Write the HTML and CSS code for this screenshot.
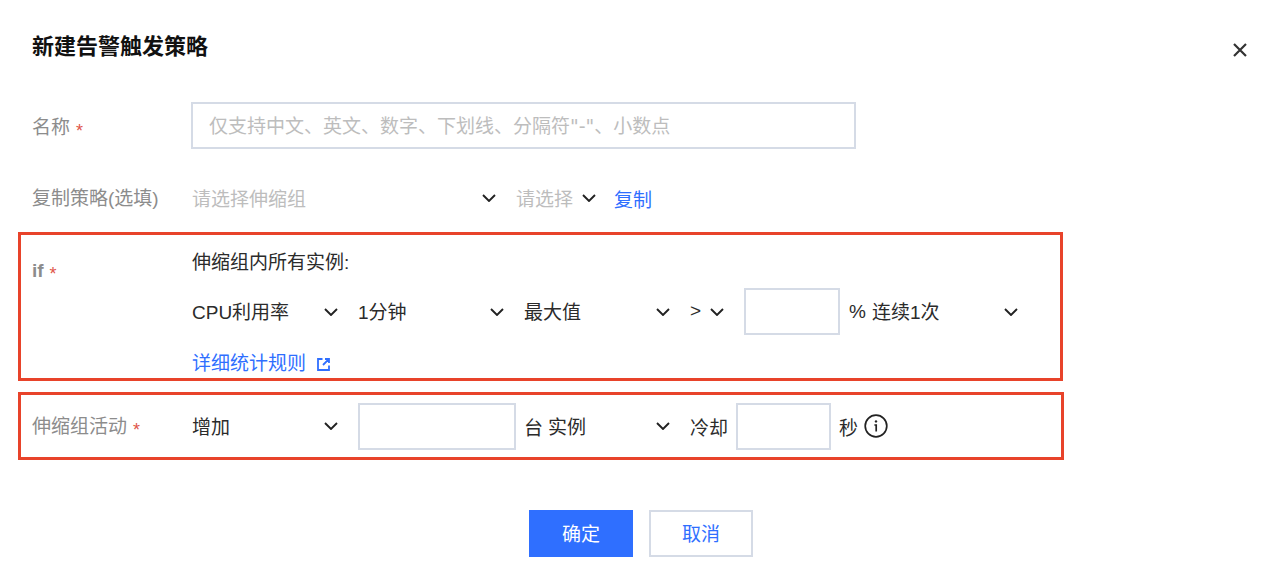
FILE: index.html
```html
<!DOCTYPE html>
<html lang="zh-CN">
<head>
  <meta charset="UTF-8">
  <title>新建告警触发策略</title>
  <link rel="stylesheet" href="styles.css">
</head>
<body>
  <div class="dialog">
    <div class="header">
      <h1 class="title">新建告警触发策略</h1>
      <svg class="close" viewBox="0 0 16 16" width="16" height="16"><path d="M2 2l12 12M14 2L2 14" fill="none" stroke="#333" stroke-width="2.2"/></svg>
    </div>

    <div class="row row-name">
      <div class="label label-name">名称<span class="required">*</span></div>
      <input class="input input-name" type="text" placeholder="仅支持中文、英文、数字、下划线、分隔符&quot;-&quot;、小数点">
    </div>

    <div class="row row-copy">
      <div class="label">复制策略(选填)</div>
      <div class="fields">
        <div class="select select-group placeholder"><span>请选择伸缩组</span><svg class="chevron" viewBox="0 0 14 8" width="14" height="8"><path d="M1 1l6 6 6-6" fill="none" stroke="#222" stroke-width="1.9"/></svg></div>
        <div class="select select-small placeholder"><span>请选择</span><svg class="chevron" viewBox="0 0 14 8" width="14" height="8"><path d="M1 1l6 6 6-6" fill="none" stroke="#222" stroke-width="1.9"/></svg></div>
        <a class="link">复制</a>
      </div>
    </div>

    <div class="box box-if">
      <div class="label label-if"><b>if</b><span class="required">*</span></div>
      <div class="if-body">
        <div class="if-line">伸缩组内所有实例:</div>
        <div class="fields if-fields">
          <div class="select"><span>CPU利用率</span><svg class="chevron" viewBox="0 0 14 8" width="14" height="8"><path d="M1 1l6 6 6-6" fill="none" stroke="#222" stroke-width="1.9"/></svg></div>
          <div class="select"><span>1分钟</span><svg class="chevron" viewBox="0 0 14 8" width="14" height="8"><path d="M1 1l6 6 6-6" fill="none" stroke="#222" stroke-width="1.9"/></svg></div>
          <div class="select"><span>最大值</span><svg class="chevron" viewBox="0 0 14 8" width="14" height="8"><path d="M1 1l6 6 6-6" fill="none" stroke="#222" stroke-width="1.9"/></svg></div>
          <div class="select select-op"><span>&gt;</span><svg class="chevron" viewBox="0 0 14 8" width="14" height="8"><path d="M1 1l6 6 6-6" fill="none" stroke="#222" stroke-width="1.9"/></svg></div>
          <div class="group">
            <input class="input input-num" type="text">
            <span class="unit">%</span>
            <div class="select select-times"><span>连续1次</span><svg class="chevron" viewBox="0 0 14 8" width="14" height="8"><path d="M1 1l6 6 6-6" fill="none" stroke="#222" stroke-width="1.9"/></svg></div>
          </div>
        </div>
        <a class="link rule-link">详细统计规则<svg class="ext" viewBox="0 0 13 13" width="13" height="13"><path d="M5.5 1H1v11h11V7.5M8 1h4v4M11.8 1.2L6 7" fill="none" stroke="#2f6fff" stroke-width="1.8"/></svg></a>
      </div>
    </div>

    <div class="box box-action">
      <div class="label">伸缩组活动<span class="required">*</span></div>
      <div class="fields">
        <div class="select"><span>增加</span><svg class="chevron" viewBox="0 0 14 8" width="14" height="8"><path d="M1 1l6 6 6-6" fill="none" stroke="#222" stroke-width="1.9"/></svg></div>
        <div class="group group-tight">
          <input class="input input-count" type="text">
          <span class="unit">台</span>
          <div class="select select-unit"><span>实例</span><svg class="chevron" viewBox="0 0 14 8" width="14" height="8"><path d="M1 1l6 6 6-6" fill="none" stroke="#222" stroke-width="1.9"/></svg></div>
        </div>
        <div class="group group-tight">
          <span class="unit">冷却</span>
          <input class="input input-cool" type="text">
          <span class="unit">秒</span>
          <svg class="info" viewBox="0 0 24 24" width="24" height="24"><circle cx="12" cy="12" r="10.8" fill="none" stroke="#222" stroke-width="1.7"/><path d="M10.4 11H12.2V17.6" fill="none" stroke="#222" stroke-width="1.7"/><circle cx="12" cy="7.4" r="1.2" fill="#222"/></svg>
        </div>
      </div>
    </div>

    <div class="footer">
      <button class="btn btn-primary">确定</button>
      <button class="btn">取消</button>
    </div>
  </div>
</body>
</html>
```

FILE: styles.css
```css
:root {
  --text-color: #2b2b2b;
  --label-color: #8c8c8c;
  --placeholder-color: #bdbdbd;
  --border-color: #d5dbe6;
  --link-color: #2f6fff;
  --mark-color: #e8432a;
}

body {
  margin: 0;
  background-color: #ffffff;
  color: var(--text-color);
  font-family: "Liberation Sans", "Noto Sans CJK SC", sans-serif;
  font-size: 19px;
}

.dialog {
  height: 588px;
  box-sizing: border-box;
  padding-top: 32px;
  overflow: hidden;
}

.header {
  display: flex;
  justify-content: space-between;
  align-items: flex-start;
  height: 70px;
  padding: 0 32px;
}

.title {
  margin: 0;
  font-size: 22px;
  line-height: 30px;
  font-weight: bold;
  color: #111111;
}

.close {
  margin: 10px 0 0 0;
}

.row {
  display: flex;
  align-items: center;
  padding-left: 32px;
}

.row-copy {
  height: 36px;
  margin-top: 31px;
}

.label {
  width: 160px;
  flex-shrink: 0;
  padding-top: 2px;
  color: var(--label-color);
  line-height: 36px;
}

.label-name {
  width: 159px;
  padding-top: 4px;
}

.required {
  margin-left: 6px;
  color: #e0554a;
  font-size: 18px;
  line-height: 1;
  vertical-align: -3px;
}

.fields {
  display: flex;
  align-items: center;
  gap: 18px;
}

.group {
  display: flex;
  align-items: center;
  gap: 9px;
}

.group-tight {
  gap: 8px;
}

.select {
  width: 148px;
  padding-right: 2px;
  box-sizing: border-box;
  display: flex;
  justify-content: space-between;
  align-items: center;
}

.select span {
  margin-top: -2px;
}

.select-group {
  width: 306px;
}

.select-small {
  width: 80px;
  padding-right: 0;
}

.select-op {
  width: 36px;
}

.select-times {
  width: 148px;
  margin-left: -3px;
}

.select-unit {
  width: 124px;
  margin-left: -3px;
}

.placeholder {
  color: var(--placeholder-color);
}

.input {
  box-sizing: border-box;
  height: 47px;
  padding: 3px 15px 0 16px;
  background: #ffffff;
  border: 2px solid var(--border-color);
  border-radius: 0;
  outline: none;
  font: inherit;
}

.input::placeholder {
  color: var(--placeholder-color);
  font-family: "DejaVu Sans", "Noto Sans CJK SC", sans-serif;
}

.input-name {
  width: 665px;
}

.input-num {
  width: 96px;
}

.input-count {
  width: 158px;
}

.input-cool {
  width: 95px;
}

.unit {
  white-space: nowrap;
}

.link {
  color: var(--link-color);
  cursor: pointer;
}

.box {
  display: flex;
  box-sizing: border-box;
  width: 1045px;
  margin-left: 18px;
  padding-left: 11px;
  border: 3px solid var(--mark-color);
}

.box-if {
  height: 149px;
  margin-top: 16px;
}

.label-if {
  margin-top: 18px;
  padding-top: 0;
}

.label-if b {
  font-weight: bold;
}

.if-line {
  margin-top: 10px;
  line-height: 36px;
}

.if-fields {
  margin-top: 7px;
}

.rule-link {
  display: flex;
  align-items: center;
  gap: 11px;
  margin-top: 14px;
  line-height: 30px;
}

.box-action {
  align-items: center;
  width: 1046px;
  height: 68px;
  margin-top: 11px;
}

.info {
  margin-left: -2px;
}

.footer {
  display: flex;
  justify-content: center;
  gap: 16px;
  margin-top: 50px;
  padding-left: 2px;
}

.btn {
  width: 104px;
  height: 47px;
  padding: 0 0 2px 0;
  background: #ffffff;
  border: 2px solid var(--border-color);
  color: var(--link-color);
  font: inherit;
  cursor: pointer;
}

.btn-primary {
  background: var(--link-color);
  border-color: var(--link-color);
  color: #ffffff;
}
```
